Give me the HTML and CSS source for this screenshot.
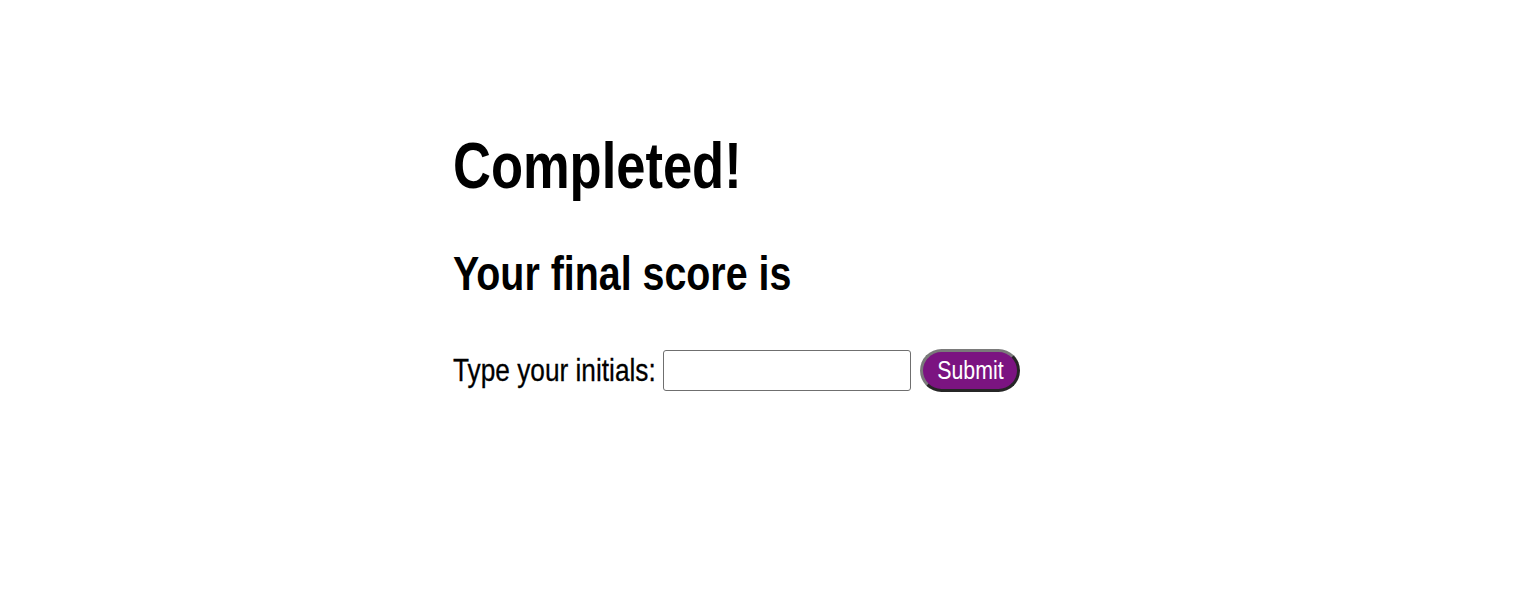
FILE: index.html
```html
<!DOCTYPE html>
<html lang="en">
<head>
<meta charset="utf-8">
<title>Completed</title>
<link rel="stylesheet" href="styles.css">
</head>
<body>
<main class="page">
  <section class="end-screen">
    <h1 class="title"><span class="narrow">Completed!</span></h1>
    <h2 class="score"><span class="narrow">Your final score is</span></h2>
    <form class="initials-form">
      <label class="label" for="initials"><span class="narrow">Type your initials:</span></label>
      <input class="initials-input" id="initials" type="text">
      <button class="submit-btn" type="button"><span class="narrow-center">Submit</span></button>
    </form>
  </section>
</main>
</body>
</html>
```

FILE: styles.css
```css
html, body {
  margin: 0;
  padding: 0;
  background: #ffffff;
}
body {
  font-family: "Liberation Sans", Arial, sans-serif;
  color: #000;
}
.narrow {
  display: inline-block;
  white-space: nowrap;
  transform: scaleX(0.82);
  transform-origin: left center;
}
.narrow-center {
  display: inline-block;
  white-space: nowrap;
  transform: scaleX(0.82);
  transform-origin: center center;
}
.page {
  display: flex;
  justify-content: center;
  padding-top: 130px;
}
.end-screen {
  width: 624px;
}
.title {
  margin: 0;
  font-size: 64px;
  font-weight: bold;
  line-height: 1.15;
}
.score {
  margin: 42px 0 0;
  font-size: 48px;
  font-weight: bold;
  line-height: 1.15;
}
.initials-form {
  margin-top: 48px;
  display: flex;
  align-items: center;
}
.label {
  width: 202px;
  margin-right: 8px;
  font-size: 32px;
  line-height: 1.15;
  white-space: nowrap;
  -webkit-text-stroke: 0.3px #000;
}
.initials-input {
  box-sizing: border-box;
  width: 248px;
  height: 41px;
  margin: 0 9px 0 0;
  border: 1px solid #6f6f6f;
  border-radius: 3px;
  padding: 0 6px;
  font-size: 24px;
  font-family: inherit;
  background: #fff;
}
.submit-btn {
  box-sizing: border-box;
  height: 43px;
  width: 100px;
  padding: 0;
  border: 3px solid;
  border-color: #7a7a7a #262626 #262626 #7a7a7a;
  border-radius: 22px;
  background: #7b1481;
  color: #fff;
  font-family: inherit;
  font-size: 26px;
  line-height: 1;
}
```
